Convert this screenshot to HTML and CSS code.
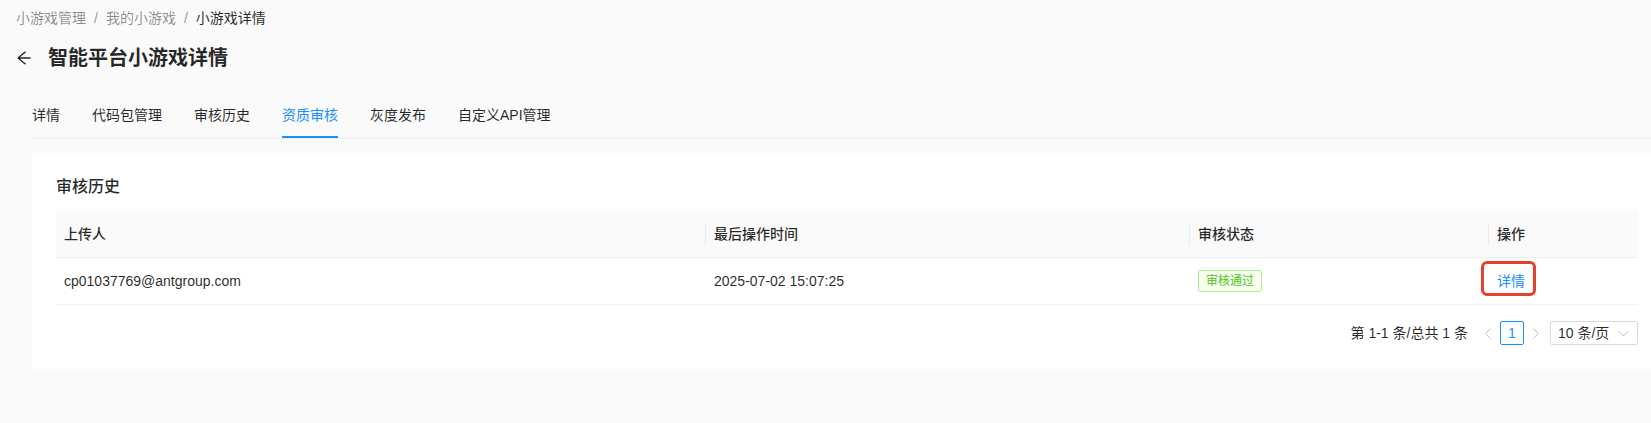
FILE: index.html
```html
<!doctype html>
<html>
  <head>
    <title>智能平台小游戏详情</title>
    <meta name="viewport" content="width=device-width,initial-scale=1.0"/>
    <meta charset="utf-8"/>
    <link rel="stylesheet" href="styles.css">
  </head>
  <body>
    <div class="page-head">
      <div class="crumbs">
        <span class="crumb">小游戏管理</span><span class="sep">/</span><span class="crumb">我的小游戏</span><span class="sep">/</span><span class="crumb current">小游戏详情</span>
      </div>
      <div class="title-row">
        <span class="back">
          <svg viewBox="64 64 896 896" width="16" height="16"><path fill="currentColor" d="M872 474H286.9l350.2-304c5.6-4.9 2.2-14-5.2-14h-88.5c-3.9 0-7.6 1.4-10.5 3.9L155 487.8a31.96 31.96 0 000 48.3L535.1 866c1.5 1.3 3.3 2 5.2 2h91.5c7.4 0 10.8-9.2 5.2-14L286.9 550H872c4.4 0 8-3.6 8-8v-60c0-4.4-3.6-8-8-8z"/></svg>
        </span>
        <h1>智能平台小游戏详情</h1>
      </div>
    </div>
    <div class="tabs">
      <div class="tab">详情</div>
      <div class="tab">代码包管理</div>
      <div class="tab">审核历史</div>
      <div class="tab active">资质审核</div>
      <div class="tab">灰度发布</div>
      <div class="tab">自定义API管理</div>
    </div>
    <div class="card">
      <h2>审核历史</h2>
      <table>
        <colgroup>
          <col class="c1"><col class="c2"><col class="c3"><col class="c4">
        </colgroup>
        <thead>
          <tr><th>上传人</th><th>最后操作时间</th><th>审核状态</th><th>操作</th></tr>
        </thead>
        <tbody>
          <tr>
            <td>cp01037769@antgroup.com</td>
            <td>2025-07-02 15:07:25</td>
            <td><span class="tag">审核通过</span></td>
            <td><a class="link marked">详情</a></td>
          </tr>
        </tbody>
      </table>
      <div class="pager">
        <span class="total">第 1-1 条/总共 1 条</span>
        <span class="arrow"><svg width="6" height="11" viewBox="0 0 6 11"><polyline points="5.5,0.5 0.8,5.5 5.5,10.5" fill="none" stroke="currentColor" stroke-width="1"/></svg></span>
        <span class="page-item">1</span>
        <span class="arrow"><svg width="6" height="11" viewBox="0 0 6 11"><polyline points="0.5,0.5 5.2,5.5 0.5,10.5" fill="none" stroke="currentColor" stroke-width="1"/></svg></span>
        <span class="size-select">10 条/页<svg width="11" height="7" viewBox="0 0 11 7"><polyline points="0.5,0.8 5.5,6 10.5,0.8" fill="none" stroke="currentColor" stroke-width="1"/></svg></span>
      </div>
    </div>
  </body>
</html>
```
FILE: styles.css
```css
*{
  box-sizing:border-box;
}
html,body{
  margin:0;
  padding:0;
  background:#fafafa;
  overflow:hidden;
}
body{
  font-family:"Liberation Sans","Noto Sans CJK SC",sans-serif;
  font-size:14px;
  line-height:22px;
  color:rgba(0,0,0,.85);
}
.page-head{
  padding:7px 16px 0;
}
.crumbs{
  display:flex;
  color:rgba(0,0,0,.45);
}
.sep{
  margin:0 8px;
}
.current{
  color:rgba(0,0,0,.85);
}
.title-row{
  display:flex;
  align-items:center;
  height:32px;
  margin-top:13px;
}
.back{
  display:flex;
  width:16px;
  height:16px;
  margin-right:16px;
}
h1{
  margin:0;
  font-size:20px;
  line-height:32px;
  font-weight:600;
}
.tabs{
  display:flex;
  gap:32px;
  margin:18px 0 0 32px;
  border-bottom:1px solid #f0f0f0;
}
.tab{
  padding:12px 0;
}
.tab.active{
  color:#1890ff;
  box-shadow:inset 0 -2px 0 #1890ff;
}
.card{
  margin:16px -11px 0 32px;
  padding:20px 24px 8px;
  background:#fff;
}
h2{
  margin:0 0 12px;
  font-size:16px;
  line-height:24px;
  font-weight:500;
}
table{
  width:100%;
  border-collapse:collapse;
  table-layout:fixed;
}
.c1{width:650px;}
.c2{width:484px;}
.c3{width:299px;}
.c4{width:149px;}
th,td{
  padding:12px 8px;
  text-align:left;
  border-bottom:1px solid #f0f0f0;
}
th{
  position:relative;
  background:#fafafa;
  font-weight:500;
}
th+th::before{
  content:"";
  position:absolute;
  left:-1px;
  top:50%;
  width:1px;
  height:22px;
  margin-top:-11px;
  background:rgba(0,0,0,.06);
}
.tag{
  display:inline-block;
  padding:0 7px;
  font-size:12px;
  line-height:20px;
  color:#52c41a;
  background:#f6ffed;
  border:1px solid #b7eb8f;
  border-radius:2px;
  vertical-align:top;
}
.link{
  display:inline-block;
  color:#1890ff;
  cursor:pointer;
}
.marked{
  position:relative;
}
.marked::after{
  content:"";
  position:absolute;
  left:-16px;
  right:-11px;
  top:-9px;
  bottom:-4px;
  border:3px solid #e5402b;
  border-radius:6px;
}
.pager{
  display:flex;
  justify-content:flex-end;
  align-items:center;
  margin:16px 0;
}
.total{
  margin-right:8px;
}
.arrow{
  display:flex;
  align-items:center;
  justify-content:center;
  width:24px;
  height:24px;
  color:rgba(0,0,0,.25);
}
.page-item{
  width:24px;
  height:24px;
  line-height:22px;
  text-align:center;
  color:#1890ff;
  border:1px solid #1890ff;
  border-radius:2px;
}
.size-select{
  display:flex;
  align-items:center;
  justify-content:space-between;
  width:88px;
  height:24px;
  margin-left:2px;
  padding:0 8px 0 7px;
  border:1px solid #d9d9d9;
  border-radius:2px;
  background:#fff;
}
.size-select svg{
  color:rgba(0,0,0,.25);
}
```
